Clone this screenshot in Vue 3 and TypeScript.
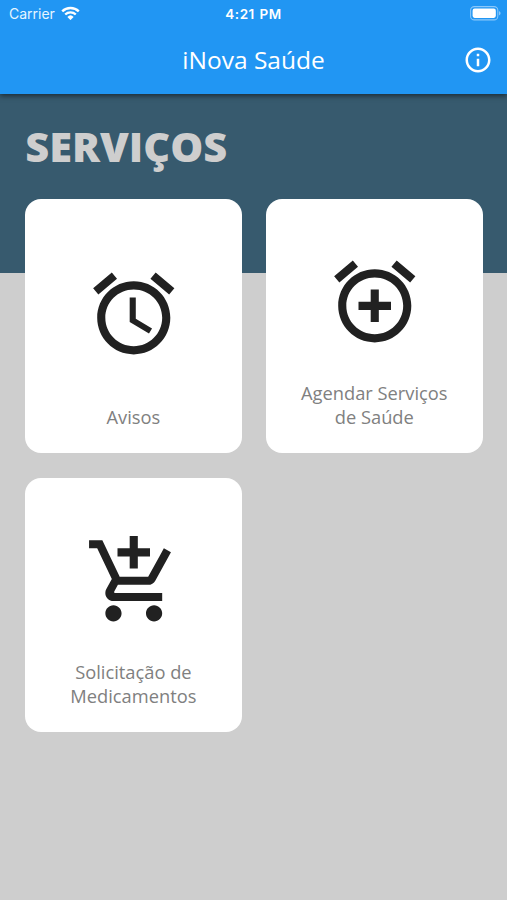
<script setup lang="ts">
interface Service {
  label: string
  lines: string[]
  icon: string
}

const services: Service[] = [
  {
    label: 'Avisos',
    lines: ['Avisos'],
    icon: 'M22 5.72l-4.6-3.86-1.29 1.53 4.6 3.86L22 5.72zM7.88 3.39L6.6 1.86 2 5.71l1.29 1.53 4.59-3.85zM12.5 8H11v6l4.75 2.85.75-1.23-4-2.37V8zM12 4c-4.97 0-9 4.03-9 9s4.02 9 9 9c4.97 0 9-4.03 9-9s-4.03-9-9-9zm0 16c-3.87 0-7-3.13-7-7s3.13-7 7-7 7 3.13 7 7-3.13 7-7 7z',
  },
  {
    label: 'Agendar Serviços de Saúde',
    lines: ['Agendar Serviços', 'de Saúde'],
    icon: 'M7.88 3.39L6.6 1.86 2 5.71l1.29 1.53 4.59-3.85zM22 5.72l-4.6-3.86-1.29 1.53 4.6 3.86L22 5.72zM12 4c-4.97 0-9 4.03-9 9s4.02 9 9 9c4.97 0 9-4.03 9-9s-4.03-9-9-9zm0 16c-3.87 0-7-3.13-7-7s3.13-7 7-7 7 3.13 7 7-3.13 7-7 7zm1-11h-2v3H8v2h3v3h2v-3h3v-2h-3V9z',
  },
  {
    label: 'Solicitação de Medicamentos',
    lines: ['Solicitação de', 'Medicamentos'],
    icon: 'M11 9h2V6h3V4h-3V1h-2v3H8v2h3v3zm-4 9c-1.1 0-1.99.9-1.99 2S5.9 22 7 22s2-.9 2-2-.9-2-2-2zm10 0c-1.1 0-1.99.9-1.99 2s.89 2 1.99 2 2-.9 2-2-.9-2-2-2zm-9.83-3.25l.03-.12.9-1.63h7.45c.75 0 1.41-.41 1.75-1.03l3.86-7.01L19.42 4h-.01l-1.1 2-2.76 5H8.53l-.13-.27L6.16 6l-.95-2-.94-2H1v2h2l3.6 7.59-1.35 2.45c-.16.28-.25.61-.25.96 0 1.1.9 2 2 2h12v-2H7.42c-.13 0-.25-.11-.25-.25z',
  },
]
</script>

<template>
  <div class="screen">
    <header class="top">
      <div class="status">
        <div class="carrier">
          <span>Carrier</span>
          <svg class="wifi" viewBox="0 0 18 14" aria-hidden="true">
            <path d="M1 5.2a11.4 11.4 0 0 1 16 0M3.9 8.2a7.3 7.3 0 0 1 10.2 0" />
            <path class="dot" d="M9 13.6 6 10.5a4.3 4.3 0 0 1 6 0z" />
          </svg>
        </div>
        <span class="time">4:21 PM</span>
        <svg class="battery" viewBox="0 0 30 14" aria-hidden="true">
          <rect class="shell" x=".6" y=".6" width="26.3" height="12.8" rx="3.6" />
          <rect class="charge" x="2.5" y="2.5" width="22.5" height="9" rx="2" />
          <path class="cap" d="M28 4.8c2.1.8 2.1 3.6 0 4.4z" />
        </svg>
      </div>
      <div class="bar">
        <h1>iNova Saúde</h1>
        <button class="info" aria-label="Info">
          <svg viewBox="0 0 24 24">
            <path d="M11 7h2v2h-2zm0 4h2v6h-2zm1-9C6.48 2 2 6.48 2 12s4.48 10 10 10 10-4.48 10-10S17.52 2 12 2zm0 18c-4.41 0-8-3.59-8-8s3.59-8 8-8 8 3.59 8 8-3.59 8-8 8z" />
          </svg>
        </button>
      </div>
    </header>
    <main class="content">
      <h2>SERVIÇOS</h2>
      <div class="grid">
        <article v-for="s in services" :key="s.label" class="card">
          <svg class="icon" viewBox="0 0 24 24" aria-hidden="true"><path :d="s.icon" /></svg>
          <p>
            <span v-for="line in s.lines" :key="line" class="line">{{ line }}</span>
          </p>
        </article>
      </div>
    </main>
  </div>
</template>

<style>
body {
  margin: 0;
  background: #cecece;
}
</style>

<style scoped>
.screen {
  display: flex;
  flex-direction: column;
  height: 900px;
  overflow: hidden;
  background: #cecece;
  font-family: "Open Sans", "Noto Sans", sans-serif;
}
.top {
  position: relative;
  flex: none;
  height: 94px;
  background: #2196f3;
  color: #fff;
  box-shadow: 0 2px 5px rgba(0, 0, 0, 0.5);
}
.status {
  display: grid;
  grid-template-columns: 1fr auto 1fr;
  align-items: center;
  height: 27px;
  padding: 0 6px 0 9px;
  font: 400 14px/27px Inter, sans-serif;
}
.carrier {
  display: flex;
  align-items: center;
  gap: 6px;
  color: #e6f5ff;
}
.wifi {
  width: 19px;
  height: 14.5px;
  margin-bottom: 1px;
  fill: none;
  stroke: #fff;
  stroke-width: 2.3;
}
.wifi .dot {
  fill: #fff;
  stroke: none;
}
.time {
  margin-right: 3px;
  padding-top: 2px;
  font-weight: 600;
  font-size: 13.5px;
  line-height: 25px;
  letter-spacing: 0.5px;
  word-spacing: 0.8px;
}
.battery {
  justify-self: end;
  width: 31px;
  height: 14.5px;
}
.shell {
  fill: none;
  stroke: #8bc8fa;
  stroke-width: 1;
}
.charge {
  fill: #fff;
}
.cap {
  fill: #8bc8fa;
}
.bar {
  display: grid;
  grid-template-columns: 1fr auto 1fr;
  align-items: center;
  height: 65.5px;
  padding-right: 14.5px;
}
h1 {
  grid-column: 2;
  margin: 0 0 0 14.5px;
  font-size: 24.5px;
  font-weight: 400;
  line-height: 34px;
}
.info {
  justify-self: end;
  display: flex;
  padding: 0;
  border: 0;
  background: none;
}
.info svg {
  width: 30px;
  height: 30px;
  fill: #fff;
}
.content {
  flex: 1;
  padding: 23.5px 24.5px 0 25.2px;
  background: linear-gradient(#375a6e 179.5px, #cecece 179.5px);
}
h2 {
  margin: 0 0 25px;
  color: #cecece;
  font-size: 41.5px;
  font-weight: 800;
  line-height: 56px;
}
.grid {
  display: grid;
  grid-template-columns: 1fr 1fr;
  grid-auto-rows: 254.5px;
  gap: 24.5px;
}
.card {
  display: flex;
  flex-direction: column;
  align-items: center;
  box-sizing: border-box;
  padding: 23.7px 0 23.5px;
  border-radius: 16px;
  background: #fff;
}
.icon {
  width: 97.5px;
  height: 97.5px;
  margin: auto 0;
  fill: #212121;
}
p {
  margin: 0;
  color: #808080;
  font-size: 18.3px;
  line-height: 24.4px;
  text-align: center;
}
.line {
  display: block;
}
</style>
